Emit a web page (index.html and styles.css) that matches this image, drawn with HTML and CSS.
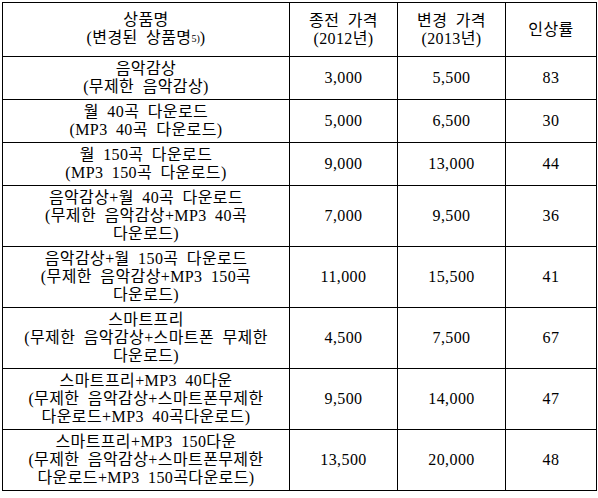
FILE: index.html
```html
<!DOCTYPE html>
<html lang="ko">
<head>
<meta charset="utf-8">
<link rel="stylesheet" href="styles.css">
</head>
<body>
<table class="price-table">
  <colgroup>
    <col class="c-name">
    <col class="c-old">
    <col class="c-new">
    <col class="c-rate">
  </colgroup>
  <thead>
    <tr>
      <th>상품명<br>(변경된 상품명<span class="fn">5)</span>)</th>
      <th>종전 가격<br>(2012년)</th>
      <th>변경 가격<br>(2013년)</th>
      <th>인상률</th>
    </tr>
  </thead>
  <tbody>
    <tr>
      <td>음악감상<br>(무제한 음악감상)</td>
      <td>3,000</td><td>5,500</td><td>83</td>
    </tr>
    <tr>
      <td>월 40곡 다운로드<br>(MP3 40곡 다운로드)</td>
      <td>5,000</td><td>6,500</td><td>30</td>
    </tr>
    <tr>
      <td>월 150곡 다운로드<br>(MP3 150곡 다운로드)</td>
      <td>9,000</td><td>13,000</td><td>44</td>
    </tr>
    <tr>
      <td>음악감상+월 40곡 다운로드<br>(무제한 음악감상+MP3 40곡<br>다운로드)</td>
      <td>7,000</td><td>9,500</td><td>36</td>
    </tr>
    <tr>
      <td>음악감상+월 150곡 다운로드<br>(무제한 음악감상+MP3 150곡<br>다운로드)</td>
      <td>11,000</td><td>15,500</td><td>41</td>
    </tr>
    <tr>
      <td>스마트프리<br>(무제한 음악감상+스마트폰 무제한<br>다운로드)</td>
      <td>4,500</td><td>7,500</td><td>67</td>
    </tr>
    <tr>
      <td>스마트프리+MP3 40다운<br>(무제한 음악감상+스마트폰무제한<br>다운로드+MP3 40곡다운로드)</td>
      <td>9,500</td><td>14,000</td><td>47</td>
    </tr>
    <tr>
      <td>스마트프리+MP3 150다운<br>(무제한 음악감상+스마트폰무제한<br>다운로드+MP3 150곡다운로드)</td>
      <td>13,500</td><td>20,000</td><td>48</td>
    </tr>
  </tbody>
</table>
</body>
</html>
```
FILE: styles.css
```css
html, body {
  margin: 0;
  padding: 0;
  background: #ffffff;
}
body {
  padding: 2px 0 0 2px;
  font-family: "Liberation Serif", "Noto Sans CJK KR", serif;
  font-size: 16px;
  color: #000000;
}
.price-table {
  border-collapse: collapse;
  table-layout: fixed;
  width: 594px;
}
.c-name { width: 287px; }
.c-old { width: 108px; }
.c-new { width: 108px; }
.c-rate { width: 91px; }
.price-table th,
.price-table td {
  border: 1px solid #000000;
  text-align: center;
  vertical-align: middle;
  font-weight: normal;
  line-height: 18px;
  padding: 3px 0;
  letter-spacing: 0.4px;
  word-spacing: 4px;
}
.price-table th {
  padding: 8px 0 7px;
}
.fn {
  font-size: 10px;
  position: relative;
  top: -1px;
  letter-spacing: 0;
  word-spacing: 0;
}
```
